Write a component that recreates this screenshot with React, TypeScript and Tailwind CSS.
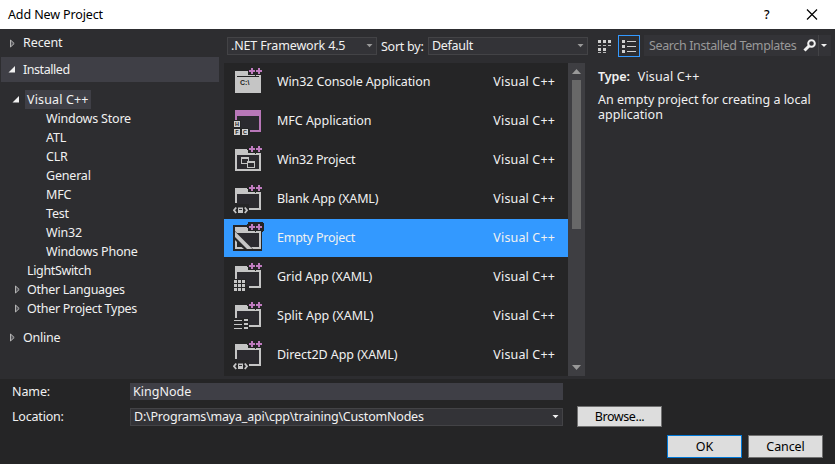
import type { ReactNode } from "react";

const FOLDER_FULL = "M2 5H14L16 8.500H28V27H2Z M4 11V25H26V11Z";
const FOLDER_CUT = "M2 5H14L16 8.500H28V27H16V25H26V11H4V20H2Z";

function Plus() {
  return (
    <path
      d="M18 2h2v2h2v2h-2v2h-2v-2h-2v-2h2z M25 2h2v2h2v2h-2v2h-2v-2h-2v-2h2z"
      fill="#c07cc0"
    />
  );
}

function Folder({ cut = false }: { cut?: boolean }) {
  return (
    <>
      <path d="M4 11H26V25H4Z" fill="#2b2a2f" />
      <path d={cut ? FOLDER_CUT : FOLDER_FULL} fill="#c5c5c5" fillRule="evenodd" />
      <path d="M15 0H30V9H15Z" fill="#252526" />
      <path d="M15 9H28V11H15Z" fill="#c5c5c5" />
      <path d="M22 8h1v2h-1z" fill="#252526" />
      <Plus />
    </>
  );
}

type Kind = "console" | "mfc" | "win32" | "xaml" | "empty" | "grid" | "split";

function BoxLetter({ x, y, ch }: { x: number; y: number; ch: string }) {
  return (
    <>
      <rect x={x} y={y} width="6" height="6" fill="#d0d0d0" />
      <text x={x + 3} y={y + 5} textAnchor="middle" fontSize="5.5" fontWeight="bold" letterSpacing="0" fill="#1c1c1e" fontFamily="Liberation Sans, sans-serif">
        {ch}
      </text>
    </>
  );
}

function TemplateIcon({ kind }: { kind: Kind }) {
  return (
    <svg width="31" height="32" viewBox="0 0 31 32" shapeRendering="crispEdges" className="mt-[3px] shrink-0">
      {kind === "console" && (
        <>
          <path d="M2 5H15V9H28V27H2Z" fill="#c5c5c5" />
          <path d="M4 10H26V11H4Z" fill="#252526" />
          <path d="M22 8h1v2h-1z" fill="#252526" />
          <text x="7" y="19" fontSize="7" fontWeight="bold" letterSpacing="0" fill="#222" fontFamily="Liberation Sans, sans-serif">
            C:\
          </text>
          <Plus />
        </>
      )}
      {kind === "mfc" && (
        <>
          <path d="M4 11H26V25H4Z" fill="#2b2a2f" />
          <path d="M2 5H28V27H17V25H26V11H4V15H2Z" fill="#b877b8" />
          <path d="M0 15H8V23H16V31H0Z" fill="#252526" />
          <BoxLetter x={1} y={16} ch="H" />
          <BoxLetter x={1} y={24} ch="F" />
          <BoxLetter x={9} y={24} ch="C" />
        </>
      )}
      {kind === "win32" && (
        <>
          <Folder />
          <path d="M8 13H16V17H22V24H14V20H8Z M9 15V19H14V17H15V15Z M15 19V23H21V19Z" fill="#c5c5c5" fillRule="evenodd" />
        </>
      )}
      {kind === "xaml" && (
        <>
          <Folder cut />
          <path d="M0 21H16V31H0Z" fill="#252526" />
          <g shapeRendering="auto" fill="none" stroke="#c5c5c5" strokeWidth="1.800">
            <path d="M3.200 24.500L1 27.200L3.200 30 M11.800 24.500L14 27.200L11.800 30" />
            <path d="M5 24.500H10V30H5Z" fill="#c5c5c5" stroke="none" />
            <path d="M6 26.500H9" stroke="#333337" strokeWidth="1" />
          </g>
        </>
      )}
      {kind === "empty" && (
        <>
          <path d="M0 3H14V2L16 0H29L31 2V8L29 10V29H0Z" fill="#252526" />
          <Folder />
          <g shapeRendering="auto">
            <path d="M2 9L21 28H2Z" fill="#252526" />
            <path d="M2 9.500L19.500 27H14L2 15Z" fill="#c5c5c5" />
            <path d="M2 18V27H11L8.500 25H4V20Z" fill="#c5c5c5" />
          </g>
        </>
      )}
      {kind === "grid" && (
        <>
          <Folder cut />
          <path d="M0 18H13V31H0Z" fill="#252526" />
          {[19, 23, 27].map((y) => (
            <path key={y} d={`M1 ${y}h3v3h-3z M5 ${y}h3v3h-3z M9 ${y}h3v3h-3z`} fill="#c5c5c5" />
          ))}
        </>
      )}
      {kind === "split" && (
        <>
          <Folder cut />
          <path d="M0 18H16V31H0Z" fill="#252526" />
          {[20, 24, 28].map((y) => (
            <path key={y} d={`M1 ${y}h8v1h-8z M11 ${y - 1}h4v2h-4z`} fill="#c5c5c5" />
          ))}
        </>
      )}
    </svg>
  );
}

const templates: { name: string; kind: Kind; spacing: string }[] = [
  { name: "Win32 Console Application", kind: "console", spacing: "tracking-[-0.12px]" },
  { name: "MFC Application", kind: "mfc", spacing: "tracking-[-0.02px]" },
  { name: "Win32 Project", kind: "win32", spacing: "tracking-[-0.2px]" },
  { name: "Blank App (XAML)", kind: "xaml", spacing: "tracking-[-0.12px]" },
  { name: "Empty Project", kind: "empty", spacing: "tracking-[-0.25px]" },
  { name: "Grid App (XAML)", kind: "grid", spacing: "tracking-[-0.03px]" },
  { name: "Split App (XAML)", kind: "split", spacing: "tracking-[0.02px]" },
  { name: "Direct2D App (XAML)", kind: "xaml", spacing: "tracking-[-0.06px]" },
];

function Arrow({ open = false }: { open?: boolean }) {
  return (
    <svg width="7" height="9" viewBox="0 0 7 9" className="shrink-0">
      {open ? (
        <path d="M7 1V7.500H0.500Z" fill="#f1f1f1" />
      ) : (
        <path d="M1.500 1V8L5.200 4.500Z" fill="#55555a" stroke="#b4b4b4" />
      )}
    </svg>
  );
}

function Down({ color = "#999999" }: { color?: string }) {
  return (
    <svg width="7" height="4" viewBox="0 0 7 4" className="shrink-0">
      <path d="M0.500 0H6.500L3.500 3.200Z" fill={color} />
    </svg>
  );
}

function Combo({ children, className, color }: { children: ReactNode; className: string; color?: string }) {
  return (
    <div className={`flex h-[18px] shrink-0 items-center justify-between border border-[#434346] bg-[#333337] pr-[3px] pl-[3px] ${className}`}>
      <span>{children}</span>
      <Down color={color} />
    </div>
  );
}

function Sidebar() {
  return (
    <nav className="w-[224px] shrink-0">
      <div className="flex h-7 items-center gap-[6px] pl-[9px]">
        <Arrow />
        <span className="pl-px tracking-[-0.1px]">Recent</span>
      </div>
      <div className="ml-px flex h-[25px] w-[218px] items-center gap-[8px] bg-[#3f3f46] pl-[7px]">
        <Arrow open />
        <span className="tracking-[-0.45px]">Installed</span>
      </div>
      <div className="mt-2 flex h-[19px] items-center pl-[12px]">
        <Arrow open />
        <span className="ml-[6px] h-[19px] w-[66px] bg-[#3f3f46] pl-[2px] leading-[19px] tracking-[0.15px]">Visual C++</span>
      </div>
      {["Windows Store", "ATL", "CLR", "General", "MFC", "Test", "Win32", "Windows Phone"].map((t) => (
        <div key={t} className="h-[19px] pl-[46px] leading-[19px] tracking-[-0.2px]">{t}</div>
      ))}
      <div className="h-[19px] pl-[27px] leading-[19px] tracking-[-0.35px]">LightSwitch</div>
      {["Other Languages", "Other Project Types"].map((t) => (
        <div key={t} className="flex h-[19px] items-center pl-[14px] tracking-[-0.28px]">
          <Arrow />
          <span className="pl-[6px]">{t}</span>
        </div>
      ))}
      <div className="mt-[10px] flex h-[19px] items-center pl-[9px]">
        <Arrow />
        <span className="pl-[7px] tracking-[-0.25px]">Online</span>
      </div>
    </nav>
  );
}

function TemplateList() {
  return (
    <div className="flex h-[313px] w-[361px] bg-[#252526]">
      <div className="w-[344px] overflow-hidden">
        {templates.map((t) => (
          <div
            key={t.name}
            className={`mb-px flex h-[38px] pr-[13px] pl-[9px] leading-[38px] ${t.kind === "empty" ? "bg-[#3399ff]" : ""}`}
          >
            <TemplateIcon kind={t.kind} />
            <span className={`ml-[13px] grow ${t.spacing}`}>{t.name}</span>
            <span className="tracking-[0.15px]">Visual C++</span>
          </div>
        ))}
      </div>
      <div className="flex w-[17px] flex-col items-center justify-between bg-[#3e3e42] pt-[6px] pb-[6px]">
        <div>
          <svg width="9" height="5" viewBox="0 0 9 5" className="block">
            <path d="M0 5H9L4.500 0Z" fill="#999999" />
          </svg>
          <div className="mt-[6px] h-[149px] w-[9px] bg-[#686868]" />
        </div>
        <svg width="9" height="5" viewBox="0 0 9 5">
          <path d="M0 0H9L4.500 5Z" fill="#999999" />
        </svg>
      </div>
    </div>
  );
}

function Toolbar() {
  return (
    <div className="flex h-[34px] items-start pl-[3px]">
      <Combo className="mt-2 w-[150px] tracking-[-0.15px]">.NET Framework 4.5</Combo>
      <span className="mt-2 ml-[4px] w-[47px] shrink-0 leading-[19px] tracking-[-0.25px] whitespace-nowrap">Sort by:</span>
      <Combo className="mt-2 w-[160px] tracking-[-0.3px]">Default</Combo>
      <svg width="14" height="14" viewBox="0 0 14 14" className="mt-[10px] ml-[10px] shrink-0" shapeRendering="crispEdges">
        <path d="M0 1h3v3h-3z M5 1h3v3h-3z M10 1h3v3h-3z M0 9h3v3h-3z M5 9h3v3h-3z" fill="#d0d0d0" />
        <path d="M0 6h3v1h-3z M5 6h3v1h-3z M10 6h3v1h-3z M0 13h3v1h-3z M5 13h3v1h-3z" fill="#b8b8b8" />
      </svg>
      <div className="mt-[6px] ml-[6px] flex h-[22px] w-[22px] shrink-0 items-center justify-center border border-[#3399ff]">
        <svg width="14" height="14" viewBox="0 0 14 14" shapeRendering="crispEdges">
          <path d="M0 1h3v3h-3z M0 6h3v3h-3z M0 11h3v3h-3z M5 2h9v1h-9z M5 7h9v1h-9z M5 12h9v1h-9z" fill="#d0d0d0" />
        </svg>
      </div>
      <div className="mt-[6px] ml-[4px] flex h-[21px] w-[187px] items-center bg-[#333337] pl-[5px] text-[#999999]">
        <span className="w-[148px] shrink-0 tracking-[-0.37px] whitespace-nowrap">Search Installed Templates</span>
        <svg width="14" height="13" viewBox="0 0 14 13" className="ml-[6px] shrink-0">
          <circle cx="8.500" cy="4.500" r="3.300" fill="none" stroke="#f1f1f1" strokeWidth="2" />
          <path d="M6 7L1.500 11.500" stroke="#f1f1f1" strokeWidth="3" />
        </svg>
        <div className="ml-px h-[21px] w-px shrink-0 bg-[#434346]" />
        <svg width="6" height="3" viewBox="0 0 6 3" className="ml-[2px] shrink-0">
          <path d="M0 0H6L3 3Z" fill="#f1f1f1" />
        </svg>
      </div>
    </div>
  );
}

function Footer() {
  return (
    <footer className="flex h-[85px] flex-col bg-[#252526] pt-1 pl-3">
      <div className="flex h-[17px] items-center">
        <span className="w-[118px] tracking-[-0.1px]">Name:</span>
        <div className="h-[17px] w-[433px] bg-[#3f3f46] pl-[3px] leading-[17px]">KingNode</div>
      </div>
      <div className="mt-[6px] flex h-[21px] items-center">
        <span className="w-[118px] tracking-[-0.2px]">Location:</span>
        <Combo className="w-[433px] tracking-[-0.21px]" color="#f1f1f1">D:\Programs\maya_api\cpp\training\CustomNodes</Combo>
        <button className="ml-[14px] h-[21px] w-[85px] border border-[#707070] bg-[#dddddd] leading-[19px] tracking-[-0.4px] text-black">Browse...</button>
      </div>
      <div className="mt-2 flex justify-end gap-[6px] pr-3">
        <button className="h-[23px] w-[75px] border border-[#0078d7] bg-[#dddddd] leading-[21px] text-black">OK</button>
        <button className="h-[23px] w-[75px] border border-[#707070] bg-[#dddddd] leading-[21px] tracking-[-0.1px] text-black">Cancel</button>
      </div>
    </footer>
  );
}

export default function App() {
  return (
    <div className="h-[464px] w-[835px] overflow-hidden bg-[#2d2d30] font-['Noto_Sans','Open_Sans',sans-serif] text-[12.5px] leading-[18px] text-[#f1f1f1]">
      <header className="flex h-[29px] items-center bg-white pl-2 text-black">
        <span className="w-[755px] tracking-[-0.12px]">Add New Project</span>
        <span className="w-[43px] pl-px font-medium">?</span>
        <svg width="12" height="12" viewBox="0 0 12 12" className="-mt-[2px]">
          <path d="M1 1.500L11 11.500M11 1.500L1 11.500" stroke="#000" strokeWidth="1.200" />
        </svg>
      </header>
      <main className="flex h-[350px]">
        <Sidebar />
        <div className="w-[611px]">
          <Toolbar />
          <div className="flex">
            <TemplateList />
            <section className="pt-[5px] pl-[13px]">
              <p>
                <span className="mr-2 font-semibold tracking-[-0.1px]">Type:</span>
                <span className="tracking-[0.15px]">Visual C++</span>
              </p>
              <p className="mt-[6px] w-[225px] leading-[15px]">An empty project for creating a local application</p>
            </section>
          </div>
        </div>
      </main>
      <Footer />
    </div>
  );
}
